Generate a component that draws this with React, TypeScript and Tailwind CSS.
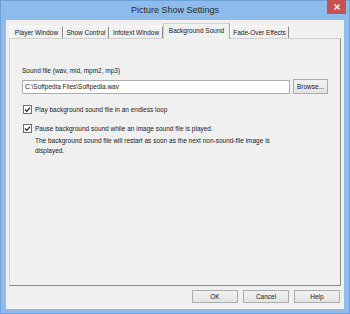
import React from 'react';

const tabs = [
  { label: 'Player Window', w: 'w-[53px]' },
  { label: 'Show Control', w: 'w-[46px]' },
  { label: 'Infotext Window', w: 'w-[54px]' },
  { label: 'Background Sound', w: 'w-[67px]', active: true },
  { label: 'Fade-Over Effects', w: 'w-[59px]' },
];

const Check = () => (
  <span className="flex w-[9px] h-[9px] shrink-0 items-center justify-center border border-[#707070] bg-white">
    <svg width="7" height="7" viewBox="0 0 7 7">
      <path d="M1 3.5 L2.8 5.3 L6 1.6" fill="none" stroke="#222" strokeWidth="1.2" />
    </svg>
  </span>
);

const Btn = ({ children, className }: { children: React.ReactNode; className?: string }) => (
  <button
    className={
      'flex items-center justify-center border border-[#acacac] bg-gradient-to-b from-[#f2f2f2] to-[#e3e3e3] text-[6.5px] text-[#1a1a1a] ' +
      (className || '')
    }
  >
    {children}
  </button>
);

export default function App() {
  return (
    <div
      className="relative flex flex-col w-[350px] h-[314px] bg-[#8dbbeb] border border-[#6fa2da] pl-[5px] pr-[5px] pb-[4px]"
      style={{ fontFamily: '"Liberation Sans", Arial, sans-serif' }}
    >
      {/* title bar */}
      <div className="h-[19px] shrink-0 flex items-center justify-center text-[9px] text-[#2b2b2b]">
        Picture Show Settings
      </div>
      <div className="absolute top-[-1px] right-[3px] w-[19px] h-[14px] bg-[#c75050] flex items-center justify-center">
        <svg width="6" height="6" viewBox="0 0 6 6">
          <path d="M0.5 0.5 L5.5 5.5 M5.5 0.5 L0.5 5.5" stroke="#fff" strokeWidth="1.4" />
        </svg>
      </div>

      {/* client area */}
      <div className="flex-1 flex flex-col bg-[#f0f0f0] px-[3px] pt-[3px]">
        {/* tabs */}
        <div className="flex items-end h-[15px] shrink-0 pl-px">
          {tabs.map(t =>
            t.active ? (
              <div
                key={t.label}
                className={`${t.w} h-[16px] -mb-px relative z-10 flex items-start justify-center pt-[2px] bg-[#f0f0f0] border border-b-0 border-[#d0d0d0] border-r-[#a8a8a8] text-[6.5px] text-[#1a1a1a] whitespace-nowrap`}
              >
                {t.label}
              </div>
            ) : (
              <div
                key={t.label}
                className={`${t.w} h-[12px] flex items-center justify-center bg-[#f0f0f0] border-t border-l border-t-white border-l-white border-r border-r-[#8a8a8a] text-[6.5px] text-[#1a1a1a] whitespace-nowrap`}
              >
                {t.label}
              </div>
            )
          )}
        </div>

        {/* panel */}
        <div className="h-[248px] shrink-0 border border-[#d0d0d0] border-r-[#8a8a8a] border-b-[#8a8a8a] bg-[#f0f0f0] pl-[12px] pr-[12px] pt-[27px]">
          <div className="text-[6.5px] text-[#1a1a1a] leading-[9px]">Sound file (wav, mid, mpm2, mp3)</div>
          <div className="flex items-center mt-[4px] h-[15px]">
            <div className="w-[268px] h-[14px] border border-[#abadb3] bg-white flex items-center pl-[2px] text-[6.5px] text-[#1a1a1a]">
              C:\Softpedia Files\Softpedia.wav
            </div>
            <Btn className="ml-[3px] w-[35px] h-[15px] border-[#707070]">Browse...</Btn>
          </div>

          <div className="flex items-center gap-[3px] mt-[11px] pl-px text-[6.5px] text-[#1a1a1a] leading-[9px]">
            <Check />
            <span>Play background sound file in an endless loop</span>
          </div>

          <div className="flex items-center gap-[3px] mt-[10px] pl-px text-[6.5px] text-[#1a1a1a] leading-[9px]">
            <Check />
            <span>Pause background sound while an image sound file is played.</span>
          </div>
          <div className="pl-[13px] mt-[3px] text-[6.5px] text-[#1a1a1a] leading-[10px] w-[270px]">
            The background sound file will restart as soon as the next non-sound-file image is displayed.
          </div>
        </div>

        {/* buttons */}
        <div className="flex justify-end gap-[5px] mt-[4px] pr-px">
          <Btn className="w-[46px] h-[13px]">OK</Btn>
          <Btn className="w-[46px] h-[13px]">Cancel</Btn>
          <Btn className="w-[46px] h-[13px]">Help</Btn>
        </div>
      </div>
    </div>
  );
}
